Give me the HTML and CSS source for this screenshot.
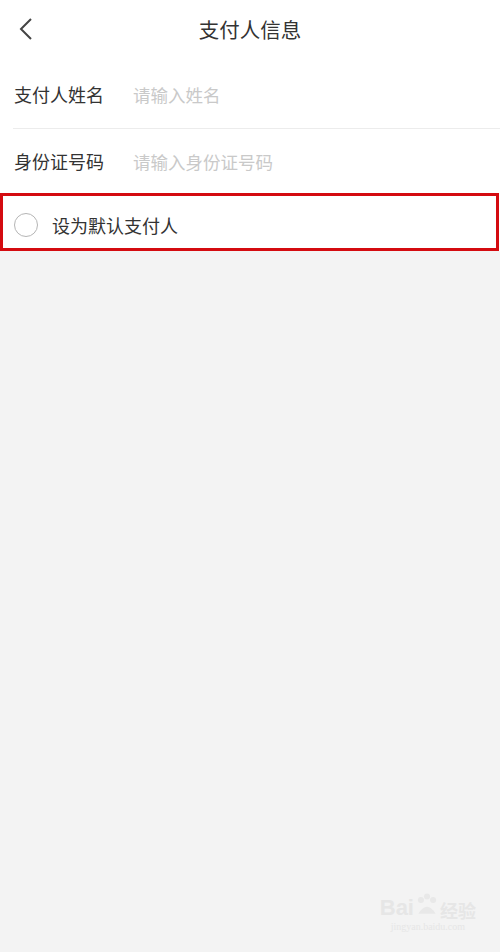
FILE: index.html
```html
<!DOCTYPE html>
<html lang="zh-CN">
<head>
    <meta charset="UTF-8">
    <meta name="viewport" content="width=device-width, initial-scale=1.0">
    <title>支付人信息</title>
    <link rel="stylesheet" href="styles.css">
</head>
<body>
    <div class="header">
        <span class="back">
            <svg width="14" height="22" viewBox="0 0 14 22"><path d="M12 1 L2 11 L12 21" fill="none" stroke="#444" stroke-width="2"/></svg>
        </span>
        <div class="title">支付人信息</div>
    </div>

    <div class="form">
        <div class="form-row first">
            <label>支付人姓名</label>
            <input type="text" placeholder="请输入姓名">
        </div>
        <div class="form-row">
            <label>身份证号码</label>
            <input type="text" placeholder="请输入身份证号码">
        </div>
        <div class="default-row">
            <span class="radio"></span>
            <span>设为默认支付人</span>
        </div>
    </div>

    <div class="watermark">
        <div class="wm-logo">
            <span>Bai</span>
            <svg width="26" height="26" viewBox="0 0 30 30">
                <circle cx="8" cy="8" r="3.5" fill="#e8e8e8"/>
                <circle cx="15" cy="4" r="3.5" fill="#e8e8e8"/>
                <circle cx="22" cy="8" r="3.5" fill="#e8e8e8"/>
                <path d="M5 24 Q15 8 25 24 Z" fill="#e8e8e8"/>
            </svg>
            <span>经验</span>
        </div>
        <div class="wm-url">jingyan.baidu.com</div>
    </div>
</body>
</html>
```

FILE: styles.css
```css
body {
    margin: 0;
    padding: 0;
    background: #f3f3f3;
    font-family: "Noto Sans CJK SC", "Noto Sans", sans-serif;
    color: #333;
    height: 952px;
    position: relative;
    overflow: hidden;
}
.header {
    height: 60px;
    background: white;
    display: flex;
    align-items: center;
    justify-content: center;
    position: relative;
}
.back {
    position: absolute;
    left: 19px;
    top: 18px;
    display: flex;
}
.title {
    font-size: 20.5px;
    color: #333;
    margin-top: -2px;
}
.form {
    background: white;
}
.form-row {
    height: 64px;
    display: flex;
    align-items: center;
    padding-left: 14px;
}
.form-row.first {
    height: 68px;
    border-bottom: 1px solid #ececec;
    margin-left: 13px;
    padding-left: 1px;
}
.form-row label {
    font-size: 18px;
    width: 119px;
    color: #333;
}
.form-row input {
    border: none;
    outline: none;
    font-family: inherit;
    font-size: 17.5px;
    padding: 0;
    flex: 1;
    color: #333;
}
.form-row input::placeholder {
    color: #c9c9c9;
}
.default-row {
    height: 52px;
    box-sizing: border-box;
    height: 58px;
    border: 3px solid #d40b10;
    display: flex;
    align-items: center;
    padding: 6px 0 0 11px;
    font-size: 18px;
    gap: 14px;
    margin-right: 1px;
}
.radio {
    width: 22px;
    height: 22px;
    border: 1.5px solid #b5b5b5;
    border-radius: 50%;
}
.watermark {
    position: absolute;
    right: 24px;
    bottom: 20px;
    color: #e6e6e6;
    text-align: center;
}
.wm-logo {
    display: flex;
    align-items: flex-end;
    font-family: "Liberation Sans", sans-serif;
    font-weight: bold;
    font-size: 22px;
    line-height: 1;
}
.wm-logo span:last-child {
    font-family: "Noto Sans CJK SC", sans-serif;
    font-size: 18px;
}
.wm-url {
    font-size: 10px;
    font-family: "Liberation Serif", serif;
    margin-top: 2px;
}
```
